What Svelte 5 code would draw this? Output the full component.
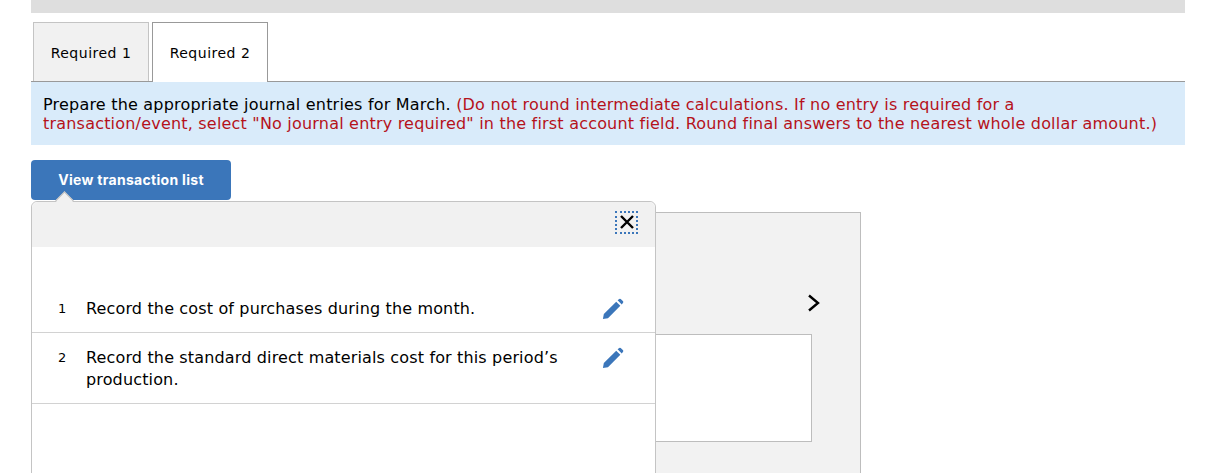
<script>
	const entries = [
		{ id: 1, text: 'Record the cost of purchases during the month.' },
		{ id: 2, text: 'Record the standard direct materials cost for this period’s production.' }
	];
</script>

<div class="page">
	<div class="topbar"></div>
	<div class="tabs">
		<button class="tab">Required 1</button>
		<button class="tab active">Required 2</button>
	</div>
	<div class="notice">
		Prepare the appropriate journal entries for March. <span class="red">(Do not round intermediate calculations. If no entry is required for a transaction/event, select "No journal entry required" in the first account field. Round final answers to the nearest whole dollar amount.)</span>
	</div>
	<div class="stage">
		<button class="view-btn">View transaction list</button>
		<div class="panel">
			<svg class="chevron" width="14" height="18" viewBox="0 0 14 18"><path d="M2 1.5 L11 9 L2 16.5" fill="none" stroke="#000" stroke-width="2.4"/></svg>
			<div class="inner"></div>
		</div>
		<div class="popover">
			<span class="arrow"></span>
			<div class="pop-head">
				<button class="close" aria-label="Close">
					<svg width="16" height="16" viewBox="0 0 16 16"><path d="M2 2 L14 14 M14 2 L2 14" stroke="#000" stroke-width="2.4"/></svg>
				</button>
			</div>
			<ul>
				{#each entries as e}
					<li>
						<span class="num">{e.id}</span>
						<span class="txt">{e.text}</span>
						<svg class="pen" width="22" height="22" viewBox="0 0 24 24"><path d="M1 23 L2 17.5 L15.5 4 L20 8.5 L6.5 22 Z M17 2.5 L18.8 1 Q19.6 .5 20.4 1 L23 3.6 Q23.5 4.4 23 5.2 L21.5 7 Z" fill="#3b76ba"/></svg>
					</li>
				{/each}
			</ul>
		</div>
	</div>
</div>

<style>
	:global(body) {
		margin: 0;
		overflow: hidden;
		background: #fff;
	}

	.page {
		height: 473px;
		padding: 0 28px 0 31px;
		font-family: "DejaVu Sans", Verdana, sans-serif;
		letter-spacing: 0.2px;
		color: #000;
		overflow: hidden;
	}

	.topbar {
		height: 13px;
		background: #dedede;
	}

	.tabs {
		display: flex;
		gap: 3px;
		height: 59px;
		margin-top: 9px;
		padding-left: 2px;
		border-bottom: 1px solid #999;
	}

	.tab {
		width: 116px;
		height: 59px;
		box-sizing: border-box;
		padding: 1px 0 0;
		border: 1px solid #c4c4c4;
		border-bottom: none;
		background: #f1f1f1;
		font: 14px "DejaVu Sans", Verdana, sans-serif;
		letter-spacing: 0.5px;
		color: #000;
	}

	.tab.active {
		height: 60px;
		padding-top: 0;
		background: #fff;
		border-color: #999;
	}

	.notice {
		height: 63px;
		box-sizing: border-box;
		padding: 13px 20px 0 12px;
		background: #d9ebfa;
		font-size: 16px;
		line-height: 19px;
	}

	.red {
		color: #b5121b;
	}

	.stage {
		position: relative;
		padding-top: 15px;
	}

	.view-btn {
		display: block;
		width: 200px;
		height: 40px;
		padding: 0 0 2px;
		border: none;
		border-radius: 4px;
		background: #3b76ba;
		color: #fff;
		font: 700 14px Inter, Arial, sans-serif;
		letter-spacing: 0.3px;
	}

	.panel {
		position: relative;
		box-sizing: border-box;
		width: 830px;
		height: 300px;
		margin-top: 12px;
		background: #f2f2f2;
		border: 1px solid #bdbdbd;
	}

	.chevron {
		position: absolute;
		right: 39px;
		top: 81px;
	}

	.inner {
		position: absolute;
		right: 48px;
		top: 121px;
		width: 400px;
		height: 108px;
		box-sizing: border-box;
		background: #fff;
		border: 1px solid #bdbdbd;
	}

	.popover {
		position: absolute;
		left: 0;
		top: 56px;
		width: 625px;
		height: 300px;
		box-sizing: border-box;
		background: #fff;
		border: 1px solid #c4c4c4;
		border-radius: 6px 6px 0 0;
	}

	.arrow {
		position: absolute;
		left: 26px;
		top: -8px;
		width: 12px;
		height: 12px;
		background: #f1f1f1;
		border-left: 1px solid #bbb;
		border-top: 1px solid #bbb;
		transform: rotate(45deg);
	}

	.pop-head {
		position: relative;
		display: flex;
		justify-content: flex-end;
		height: 45px;
		padding: 9px 17px 0 0;
		box-sizing: border-box;
		background: #f1f1f1;
		border-radius: 6px 6px 0 0;
	}

	.close {
		display: flex;
		align-items: center;
		justify-content: center;
		width: 23px;
		height: 23px;
		padding: 0 0 1px;
		background: none;
		border: 2px dotted #3b76ba;
	}

	ul {
		list-style: none;
		margin: 37px 0 0;
		padding: 0;
	}

	li {
		display: flex;
		align-items: flex-start;
		padding: 14px 0 12px 26px;
		border-bottom: 1px solid #d2d2d2;
		font-size: 16px;
		line-height: 22px;
		letter-spacing: 0.15px;
	}

	.num {
		width: 28px;
		font-size: 13px;
	}

	.txt {
		width: 490px;
	}

	.pen {
		margin-left: 26px;
	}
</style>
